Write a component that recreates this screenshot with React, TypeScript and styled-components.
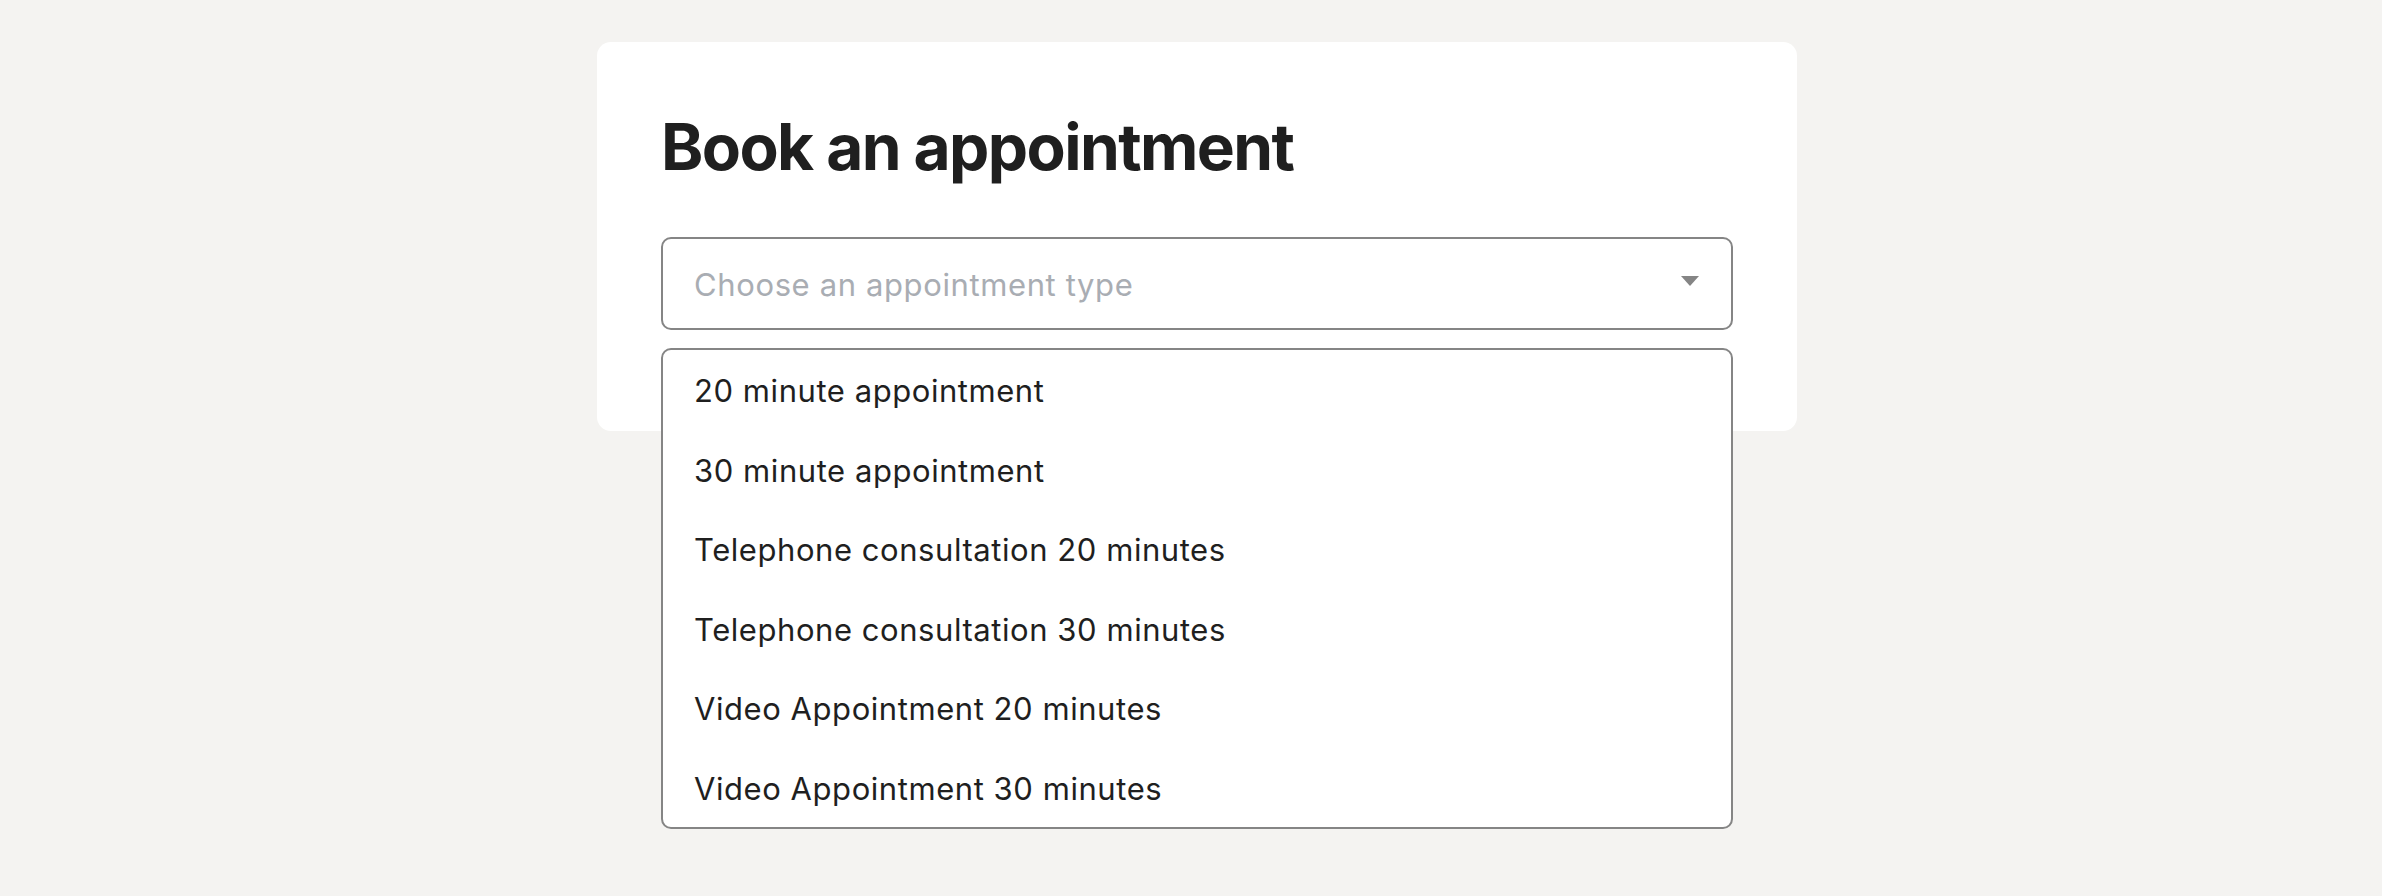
import React, { useState } from "react";
import styled, { createGlobalStyle } from "styled-components";

const GlobalStyle = createGlobalStyle`
  html, body {
    margin: 0;
    padding: 0;
    background: #f4f3f1;
  }
  body {
    font-family: Inter, "Noto Sans", "Liberation Sans", sans-serif;
    color: #1f1f1f;
  }
`;

const options = [
  "20 minute appointment",
  "30 minute appointment",
  "Telephone consultation 20 minutes",
  "Telephone consultation 30 minutes",
  "Video Appointment 20 minutes",
  "Video Appointment 30 minutes",
];

const Page = styled.main`
  min-height: 896px;
  display: flex;
  justify-content: center;
  align-items: flex-start;
  padding: 42px 0 0 12px;
  box-sizing: border-box;
`;

const Card = styled.section`
  width: 1200px;
  box-sizing: border-box;
  background: #ffffff;
  border-radius: 14px;
  padding: 67px 64px 101px;
`;

const Title = styled.h1`
  margin: 0 0 51px;
  font-size: 64px;
  line-height: 1.2;
  font-weight: 700;
  letter-spacing: -0.025em;
  color: #1f1f1f;
`;

const SelectWrap = styled.div`
  position: relative;
`;

const Trigger = styled.button`
  width: 100%;
  height: 93px;
  box-sizing: border-box;
  display: flex;
  align-items: center;
  justify-content: space-between;
  padding: 2px 32px 0 31px;
  background: #fff;
  border: 2px solid #858585;
  border-radius: 10px;
  font-family: inherit;
  cursor: pointer;
`;

const Placeholder = styled.span`
  font-size: 31px;
  color: #a9adb3;
  letter-spacing: 0.02em;
`;

const Caret = styled.svg`
  width: 18px;
  height: 10px;
  margin-top: -6px;
`;

const Menu = styled.ul`
  position: absolute;
  top: calc(100% + 18px);
  left: 0;
  right: 0;
  margin: 0;
  padding: 0;
  list-style: none;
  background: #fff;
  border: 2px solid #858585;
  border-radius: 10px;
`;

const Option = styled.li<{ $active?: boolean }>`
  height: 79.6px;
  display: flex;
  align-items: center;
  padding: 2px 31px 0;
  box-sizing: border-box;
  font-size: 31px;
  letter-spacing: 0.018em;
  color: #1f1f1f;
  background: ${({ $active }) => ($active ? "#f4f3f1" : "transparent")};
  cursor: pointer;
`;

export default function App() {
  const [open] = useState(true);
  const [hovered, setHovered] = useState<number | null>(null);

  return (
    <>
      <GlobalStyle />
      <Page>
        <Card>
          <Title>Book an appointment</Title>
          <SelectWrap>
            <Trigger type="button" aria-haspopup="listbox" aria-expanded={open}>
              <Placeholder>Choose an appointment type</Placeholder>
              <Caret viewBox="0 0 18 10">
                <path d="M0 0h18L9 10z" fill="#858585" />
              </Caret>
            </Trigger>
            {open && (
              <Menu role="listbox">
                {options.map((o, i) => (
                  <Option
                    key={o}
                    role="option"
                    $active={hovered === i}
                    onMouseEnter={() => setHovered(i)}
                    onMouseLeave={() => setHovered(null)}
                  >
                    {o}
                  </Option>
                ))}
              </Menu>
            )}
          </SelectWrap>
        </Card>
      </Page>
    </>
  );
}
